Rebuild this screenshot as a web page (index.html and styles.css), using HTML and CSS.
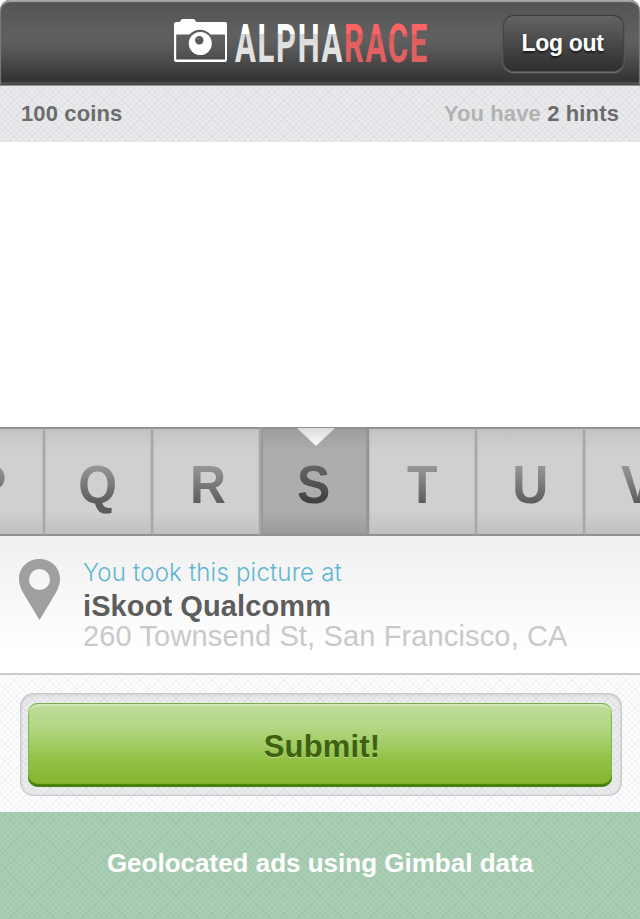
FILE: index.html
```html
<!DOCTYPE html>
<html lang="en">
<head>
<meta charset="utf-8">
<title>AlphaRace</title>
<link rel="stylesheet" href="styles.css">
</head>
<body>
<header class="topbar">
  <svg class="logo" width="260" height="50" viewBox="0 0 260 50" role="img" aria-label="AlphaRace">
    <defs>
      <linearGradient id="white" gradientUnits="userSpaceOnUse" x1="0" y1="5" x2="0" y2="44">
        <stop offset="0" stop-color="#fff"/><stop offset=".28" stop-color="#fff"/>
        <stop offset=".28" stop-color="#d6d6d6"/><stop offset=".6" stop-color="#e2e2e2"/><stop offset="1" stop-color="#e2e2e2"/>
      </linearGradient>
      <linearGradient id="red" gradientUnits="userSpaceOnUse" x1="0" y1="5" x2="0" y2="44">
        <stop offset="0" stop-color="#ff6464"/><stop offset=".28" stop-color="#ff6464"/>
        <stop offset=".28" stop-color="#d95b5b"/><stop offset=".6" stop-color="#e26060"/><stop offset="1" stop-color="#e06060"/>
      </linearGradient>
    </defs>
    <path fill="#fff" fill-rule="evenodd" d="M2 4h3.500l1.500-2q.7-1 2-1h10q1.300 0 2 1l1.500 2H51q2 0 2 2v36q0 2-2 2H2q-2 0-2-2V6q0-2 2-2zM2.200 16.500V41.500H51V16.500H36.500A14 14 0 0 0 15.500 16.500z"/>
    <circle cx="26.300" cy="25.500" r="11.500" fill="#fff"/>
    <circle cx="25.300" cy="22.300" r="4.200" fill="#585858"/>
    <circle cx="24" cy="20.800" r="1.400" fill="#777"/>
    <text class="wordmark" x="61" y="44" fill="url(#white)" textLength="109" lengthAdjust="spacingAndGlyphs">ALPHA</text>
    <text class="wordmark" x="170" y="44" fill="url(#red)" textLength="85" lengthAdjust="spacingAndGlyphs">RACE</text>
  </svg>
  <button class="logout">Log out</button>
</header>
<div class="status weave">
  <span>100 coins</span>
  <span class="hints">You have <b>2 hints</b></span>
</div>
<main class="photo"></main>
<div class="letters">
  <div class="cell"><span>P</span></div>
  <div class="cell"><span>Q</span></div>
  <div class="cell"><span class="r">R</span></div>
  <div class="cell active"><span>S</span></div>
  <div class="cell"><span>T</span></div>
  <div class="cell"><span>U</span></div>
  <div class="cell"><span>V</span></div>
</div>
<section class="place">
  <svg class="pin" width="42" height="62" viewBox="0 0 42 62" aria-hidden="true">
    <path fill="#9f9f9f" fill-rule="evenodd" d="M20.500 0C32 0 41 8.500 41 20c0 4.500-1.500 9-4 13.500L20.500 61 4 33.500C1.500 29 0 24.500 0 20 0 8.500 9 0 20.500 0zm0 10a10.500 10.500 0 1 0 0 21 10.500 10.500 0 0 0 0-21z"/>
  </svg>
  <div class="details">
    <div class="took">You took this picture at</div>
    <div class="venue">iSkoot Qualcomm</div>
    <div class="address">260 Townsend St, San Francisco, CA</div>
  </div>
</section>
<div class="action weave">
  <div class="well"><button class="submit">Submit!</button></div>
</div>
<footer class="ads weave">Geolocated ads using Gimbal data</footer>
</body>
</html>
```
FILE: styles.css
```css
* { box-sizing: border-box; }
body {
  margin: 0;
  width: 640px;
  height: 919px;
  overflow: hidden;
  background: #fff;
  font-family: "Liberation Sans", Arial, sans-serif;
  font-weight: 700;
}
button { font: inherit; border: 0; padding: 0; }
.weave {
  background-image:
    repeating-linear-gradient(45deg, rgba(0,0,20,.018) 0 1.5px, transparent 1.5px 4.243px),
    repeating-linear-gradient(-45deg, rgba(0,0,20,.018) 0 1.5px, transparent 1.5px 4.243px),
    repeating-linear-gradient(45deg, rgba(0,0,20,.014) 0 2px, transparent 2px 12.728px),
    repeating-linear-gradient(-45deg, rgba(0,0,20,.014) 0 2px, transparent 2px 12.728px);
}
.topbar {
  height: 86px;
  display: flex;
  align-items: flex-start;
  justify-content: space-between;
  padding: 15px 16px 0 174px;
  border-radius: 10px 10px 0 0;
  background: linear-gradient(#535353, #606060 36px, #585858 50px, #353535 79px, #353535 82px, #605a5c 83px, #4a4446 84px, #4a4446 85px, #999 85px);
  box-shadow: inset 0 2px 1px #a5aaa7, inset 1px 0 1px #777, inset -1px 0 1px #777;
}
.logo { margin-top: 3px; overflow: visible; }
.wordmark { font-family: Roboto, sans-serif; font-weight: 700; font-size: 54.5px; letter-spacing: 3px; }
.logout {
  width: 121px;
  height: 57px;
  border-radius: 11px;
  border: 1px solid;
  border-color: #3a3a3a #444 #505050;
  background: linear-gradient(#636363, #2e2e2e);
  box-shadow: 0 1px 1px #747474, 0 0 1px 1px #555;
  color: #fff;
  font-size: 23px;
  letter-spacing: -.3px;
  padding: 0 2px 1px 0;
  text-shadow: 0 2px 2px rgba(0,0,0,.6);
}
.status {
  height: 56px;
  display: flex;
  justify-content: space-between;
  padding: 14px 21px 0 21px;
  background-color: #e9eaec;
  color: #6c6c6e;
  font-size: 22px;
  letter-spacing: .13px;
  line-height: 27px;
}
.hints { color: #b2b2b3; }
.hints b { color: #6c6c6e; }
.photo { height: 285px; }
.letters {
  height: 109px;
  display: flex;
  margin-left: -63px;
  width: 703px;
  overflow: hidden;
}
.cell {
  flex: 0 0 108px;
  position: relative;
  display: flex;
  justify-content: center;
  padding-top: 26px;
  font-size: 53px;
  line-height: 60px;
  background: linear-gradient(#c3c3c3, #cfd0d0 22px, #cfd0d0 82px, #c0c0c0);
  border-top: 2px solid #929292;
  border-bottom: 2px solid #929292;
  border-right: 2px solid #a8a8a8;
  box-shadow: inset 1px 0 1px #bababa, inset -1px 0 1px #bebebe;
}
.cell span {
  height: 60px;
  background: linear-gradient(#989898 10px, #5b5b5b 49px);
  -webkit-background-clip: text;
  background-clip: text;
  color: transparent;
  transform: scaleX(.94);
}
.cell .r { padding-left: 4px; }
.cell.active {
  background: linear-gradient(#9d9d9d, #acadad 22px, #acadad 82px, #9b9b9b);
  border-right-color: #939393;
  box-shadow: inset 2px 0 1px #989898, inset -1px 0 1px #999;
}
.active span { background-image: linear-gradient(#666 10px, #3e3e3e 49px); }
.active::before {
  content: "";
  position: absolute;
  top: -1px;
  left: 36px;
  width: 38px;
  height: 18px;
  background: linear-gradient(#dcdcdc, #fafafa);
  clip-path: polygon(0 0, 100% 0, 50% 100%);
}
.place {
  height: 139px;
  display: flex;
  padding: 23px 0 0 19px;
  gap: 22px;
  background: linear-gradient(#f0f0f0, #fff 115px);
  border-bottom: 2px solid #c9cacb;
}
.details { white-space: nowrap; }
.took {
  font-family: Inter, sans-serif;
  font-weight: 300;
  font-size: 24px;
  letter-spacing: .2px;
  line-height: 28px;
  color: #5fb5d2;
}
.venue { font-size: 29px; letter-spacing: .1px; line-height: 30px; margin-top: 4px; color: #5d5d5d; }
.address { font-size: 29px; letter-spacing: .14px; line-height: 30px; font-weight: 400; color: #c9c9c9; }
.action { height: 137px; padding: 18px 18px 0 20px; background-color: #fcfdfe; }
.well {
  height: 103px;
  border-radius: 14px;
  padding: 10px 10px 0 8px;
  background: rgba(0,0,10,.065);
  box-shadow: inset 0 0 2px 1px #c4c4c6, inset 0 2px 4px rgba(0,0,0,.08);
}
.submit {
  display: block;
  width: 100%;
  height: 84px;
  border-radius: 10px;
  background: linear-gradient(#bedd9a, #b3d784 24px, #90c144 58px, #84b62c);
  box-shadow: inset 0 -3px 1px #457f0c, inset 0 1px 0 #7aae55, inset 0 3px 1px #d3eab7, inset 1px 0 1px #82b44d, inset -1px 0 1px #82b44d;
  color: #3f5f12;
  font-size: 31px;
  letter-spacing: .15px;
  padding: 3px 0 0 4px;
  text-shadow: 0 1px 0 #b5da7d;
}
.ads {
  height: 107px;
  background-color: #a8ceb3;
  color: #fff;
  font-size: 26px;
  line-height: 30px;
  padding-top: 36px;
  text-align: center;
}
```
